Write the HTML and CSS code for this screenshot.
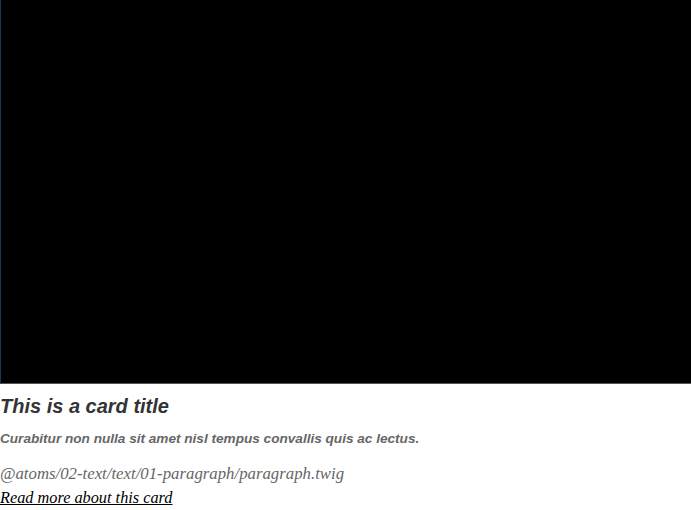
FILE: index.html
```html
<!DOCTYPE html>
<html>
<head>
<meta charset="utf-8">
<link rel="stylesheet" href="styles.css">
</head>
<body>
<div class="card">
  <div class="card-media"></div>
  <div class="card-body">
    <h2 class="card-title">This is a card title</h2>
    <p class="card-subtitle">Curabitur non nulla sit amet nisl tempus convallis quis ac lectus.</p>
    <p class="card-text">@atoms/02-text/text/01-paragraph/paragraph.twig</p>
    <a class="card-link" href="#">Read more about this card</a>
  </div>
</div>
</body>
</html>
```
FILE: styles.css
```css
html, body {
  margin: 0;
  padding: 0;
  background: #fff;
}
.card {
  width: 691px;
}
.card-media {
  height: 384px;
  background: #000;
  border-left: 1px solid #1d3557;
  border-bottom: 1px solid #555;
  box-sizing: border-box;
}
.card-body {
  display: flex;
  flex-direction: column;
  align-items: flex-start;
}
.card-title {
  margin: 9px 0 0;
  font-family: "Liberation Sans", Arial, sans-serif;
  font-style: italic;
  font-weight: bold;
  font-size: 20px;
  line-height: 26px;
  color: #333;
}
.card-subtitle {
  margin: 11px 0 0;
  font-family: "Liberation Sans", Arial, sans-serif;
  font-style: italic;
  font-weight: bold;
  font-size: 13.6px;
  line-height: 18px;
  color: #666;
}
.card-text {
  margin: 16px 0 0;
  font-family: "Liberation Serif", Georgia, serif;
  font-style: italic;
  font-size: 16.8px;
  line-height: 20px;
  color: #666;
}
.card-link {
  margin-top: 4px;
  font-family: "Liberation Serif", Georgia, serif;
  font-style: italic;
  font-size: 16.3px;
  line-height: 20px;
  color: #000;
  text-decoration: underline;
}
```
